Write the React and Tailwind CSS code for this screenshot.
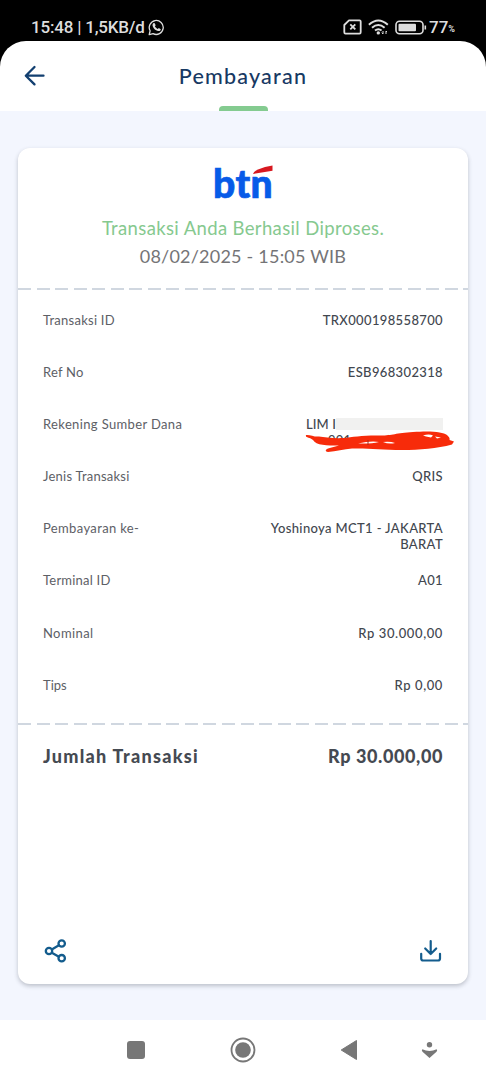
const navy = "#123f70";

function StatusBar() {
  return (
    <div className="flex h-[67px] items-start justify-between bg-black pl-[31px] pr-[31px] pt-[16px] font-['Roboto',sans-serif] text-[#dedede]">
      <div className="flex h-[22px] items-center">
        <span className="whitespace-nowrap text-[17px] font-medium leading-[22px] tracking-[-0.2px]">15:48 | 1,5KB/d</span>
        <svg className="ml-[3px]" width="17" height="17" viewBox="0 0 17 17" fill="none" stroke="currentColor" strokeWidth="1.3" strokeLinejoin="round">
          <path d="M1.2 15.7 2.1 11.8A7 7 0 1 1 5.1 14.7Z" />
          <path d="M5.1 4.3 6.5 4l1.2 2.2-.8 1c.7 1.3 1.5 2.1 2.9 2.8l1-.9 2 1.1c-.2 1.5-1.3 2.1-2.5 1.8C7.400 11.500 4.700 8.600 4.500 5.900Z" fill="currentColor" stroke="none" />
        </svg>
      </div>
      <div className="flex h-[22px] items-center">
        <svg width="19" height="16" viewBox="0 0 19 16" fill="none" stroke="currentColor" strokeWidth="1.8" strokeLinejoin="round">
          <path d="M6 1.300H16.500Q17.700 1.300 17.700 2.500V13.300Q17.700 14.600 16.500 14.600H2.500Q1.300 14.600 1.300 13.300V6Z" />
          <path d="m7.300 5.400 5 5m0-5-5 5" />
        </svg>
        <svg className="ml-[6px]" width="21" height="17" viewBox="0 0 21 17" fill="none" stroke="currentColor" strokeWidth="2">
          <path d="M.9 5.700Q10.300-2.800 19.800 5.700M4 8.800Q10.300 3.300 16.600 8.800M7 11.500Q10.300 8.900 13.600 11.500" />
          <circle cx="10.300" cy="13.900" r="1.700" fill="currentColor" stroke="none" />
          <path d="M15 12v3m-1.300-1.300L15 15m3-3v3m0-3 1 1" strokeWidth="1" />
        </svg>
        <svg className="ml-[6px]" width="32" height="15" viewBox="0 0 32 15" fill="none">
          <rect x="1" y="1.300" width="27" height="12.500" rx="3.500" stroke="currentColor" strokeWidth="1.600" />
          <rect x="3.500" y="3.800" width="17.500" height="7.500" rx="1" fill="currentColor" />
          <path d="M30.300 5.500v4" stroke="currentColor" strokeWidth="1.600" />
        </svg>
        <span className="ml-[2px] text-[17px] font-medium leading-[22px]">77</span>
        <span className="mt-[5px] text-[9px] font-bold leading-[9px]">%</span>
      </div>
    </div>
  );
}

function Header() {
  return (
    <header className="relative -mt-[26px] flex h-[70px] flex-col items-center rounded-t-[26px] bg-white">
      <svg className="absolute left-[24px] top-[24px]" width="21" height="22" viewBox="0 0 21 22" fill="none" stroke={navy} strokeWidth="2.300" strokeLinecap="round" strokeLinejoin="round">
        <path d="M10.500 2 1.800 10.700l8.700 8.700M2.200 10.700H19.500" />
      </svg>
      <h1 className="mt-[22px] whitespace-nowrap text-[21.500px] font-medium leading-[26px] tracking-[1.200px] text-[#173963]">Pembayaran</h1>
      <div className="mt-auto h-[5px] w-[49px] rounded-t-[4px] bg-[#84cb90]" />
    </header>
  );
}

function Divider() {
  return <div className="h-[2px] w-full bg-[repeating-linear-gradient(90deg,#d0d7e0_0_13px,transparent_13px_18.55px)]" />;
}

function Row({ label, labelClass, valueClass = "tracking-[0.36px]", children }) {
  return (
    <div className="flex h-[52.100px] items-start justify-between whitespace-nowrap text-[13px] leading-[16px]">
      <span className={`text-[#5d6066] ${labelClass}`}>{label}</span>
      <div className={`text-right font-medium text-[#42474f] ${valueClass}`}>{children}</div>
    </div>
  );
}

function Source() {
  return (
    <div className="relative flex w-[137px] flex-col">
      <div className="flex h-[16px] items-center">
        <span className="tracking-[0.1px]">LIM I</span>
        <div className="ml-auto h-[12px] w-[107px] bg-[#f1f1f0]" />
      </div>
      <div className="pl-[22px] text-left tracking-[0.2px]">901</div>
      <svg className="absolute -left-[1px] top-[15px]" width="152" height="26" viewBox="0 0 152 26">
        <path fill="#f72b0a" d="M1 4C5 3.500 9 6 14 5.500C20 6.500 28 7.500 39 7C47 6 60 4 76 4.500C87 4.500 91 2 108 1C126-.5 138 1 142 4C144 6 145 7 144.500 9L149 10.500 147 13.500C132 17.500 115 19 97 19C77 18.500 61 17 47 17.500C39 18 31 20.500 23 21C20 20.500 20 18.500 23 17.500L34 14.500C22 14.500 11 14.500 8 9 5 6 0 7 1 4Z" />
        <path fill="white" d="M53 12.500Q66 9.500 74 11Q66 13 53 12.500ZM78 11q7-1 12 1-6 1.500-12-1ZM118 4.500q6-2 10 0l-2 2-5-1ZM130 5.500l6 1-4 1Z" />
        <path d="M63 9v5" stroke="#a42b1d" strokeWidth="1" />
      </svg>
    </div>
  );
}

function Logo() {
  return (
    <div className="relative mx-auto mt-[14px] h-[42px] w-[60px]">
      <span className="block whitespace-nowrap text-[39px] font-black leading-[42px] tracking-[0.4px] text-[#075be8] [-webkit-text-stroke:0.7px_#075be8]">btn</span>
      <svg className="absolute left-[40px] top-[3px]" width="20" height="10" viewBox="0 0 20 10">
        <path d="M0 9Q1 6.200 5 4.500L12 2 19.500.500V5.700Z" fill="#d71920" />
      </svg>
    </div>
  );
}

function Receipt() {
  return (
    <section className="mx-[18px] mt-[37px] flex h-[836px] flex-col rounded-[12px] bg-white shadow-[0_2px_4px_rgba(60,65,80,0.3)]">
      <Logo />
      <p className="mt-[11px] self-center whitespace-nowrap text-[18.500px] leading-[26px] tracking-[0.360px] text-[#86c98f]">Transaksi Anda Berhasil Diproses.</p>
      <p className="mt-[2px] self-center whitespace-nowrap text-[18px] leading-[26px] tracking-[0.220px] text-[#747476]">08/02/2025 - 15:05 WIB</p>
      <div className="h-[19px]" />
      <Divider />
      <div className="flex flex-col pl-[25px] pr-[25px] pt-[22px]">
        <Row label="Transaksi ID" labelClass="tracking-[0.25px]">TRX000198558700</Row>
        <Row label="Ref No" labelClass="tracking-[0.2px]">ESB968302318</Row>
        <Row label="Rekening Sumber Dana" labelClass="tracking-[0.36px]"><Source /></Row>
        <Row label="Jenis Transaksi" labelClass="tracking-[0.23px]">QRIS</Row>
        <Row label="Pembayaran ke-" labelClass="tracking-[0.36px]">Yoshinoya MCT1 - JAKARTA<br />BARAT</Row>
        <Row label="Terminal ID" labelClass="tracking-[0.22px]">A01</Row>
        <Row label="Nominal" labelClass="tracking-[0.4px]" valueClass="tracking-[0.6px]">Rp 30.000,00</Row>
        <Row label="Tips" labelClass="tracking-[0px]" valueClass="tracking-[0.6px]">Rp 0,00</Row>
      </div>
      <div className="-mt-[6px]"><Divider /></div>
      <div className="mt-[18px] flex justify-between whitespace-nowrap px-[25px] text-[18px] font-black leading-[26px] text-[#454a52]">
        <span className="tracking-[1.280px]">Jumlah Transaksi</span><span className="tracking-[0.600px]">Rp 30.000,00</span>
      </div>
      <div className="mb-[20px] mt-auto flex items-center justify-between pl-[26px] pr-[26px]">
        <svg width="23" height="26" viewBox="0 0 23 26" fill="none" stroke="#135c8d" strokeWidth="2.300">
          <circle cx="5" cy="13" r="3.200" /><circle cx="17.700" cy="5.500" r="3.200" /><circle cx="17.700" cy="20.200" r="3.200" />
          <path d="m7.800 11.400 7.100-4.200M7.800 14.700l7.100 4" />
        </svg>
        <svg width="23" height="26" viewBox="0 0 23 26" fill="none" stroke="#135c8d" strokeWidth="2.200" strokeLinecap="round" strokeLinejoin="round">
          <path d="M11.700 3v13m-5.500-5.500 5.500 5.500 5.500-5.500M2.200 15.800V20.500Q2.200 22.500 4.200 22.500H19Q21 22.500 21 20.500V15.800" />
        </svg>
      </div>
    </section>
  );
}

function NavBar() {
  return (
    <nav className="flex h-[60px] items-center bg-white pl-[127px] text-[#777]">
      <div className="h-[18px] w-[18px] rounded-[3px] bg-current" />
      <svg className="ml-[85px]" width="26" height="26" viewBox="0 0 26 26">
        <circle cx="13" cy="13" r="11.500" fill="none" stroke="currentColor" strokeWidth="1.800" />
        <circle cx="13" cy="13" r="7.800" fill="currentColor" />
      </svg>
      <svg className="ml-[84px]" width="18" height="22" viewBox="0 0 18 22">
        <path d="M16.500 1.500v19L1.200 11Z" fill="currentColor" stroke="currentColor" strokeLinejoin="round" />
      </svg>
      <svg className="ml-[63px]" width="17" height="18" viewBox="0 0 17 18" fill="currentColor">
        <circle cx="8.500" cy="3.800" r="2.700" />
        <path d="M1.300 8.300Q8.500 11.500 15.700 8.300 16.700 9.500 15.500 10.700L8.500 17 1.500 10.700Q.3 9.500 1.300 8.300Z" />
      </svg>
    </nav>
  );
}

export default function App() {
  return (
    <main className="flex h-[1080px] w-[486px] flex-col overflow-hidden bg-[#f3f6fe] font-['Lato',sans-serif]">
      <StatusBar />
      <Header />
      <Receipt />
      <div className="mt-auto"><NavBar /></div>
    </main>
  );
}
